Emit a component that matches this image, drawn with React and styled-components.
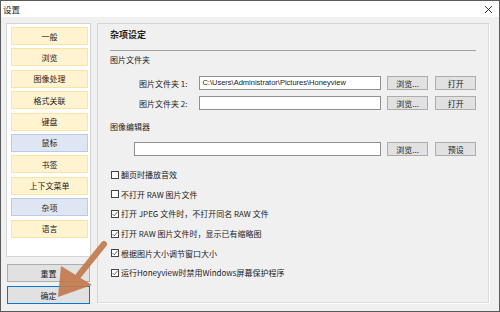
import React from 'react'
import styled, { createGlobalStyle } from 'styled-components'

const GlobalStyle = createGlobalStyle`
  body {
    margin: 0;
    background: #ffffff;
    font-family: "Noto Sans CJK SC", "Noto Sans", sans-serif;
  }
`

const navItems = [
  { label: '一般' },
  { label: '浏览' },
  { label: '图像处理' },
  { label: '格式关联' },
  { label: '键盘' },
  { label: '鼠标', blue: true },
  { label: '书签' },
  { label: '上下文菜单' },
  { label: '杂项', blue: true },
  { label: '语言' },
]

const options = [
  { text: '翻页时播放音效', checked: false },
  { text: '不打开 RAW 图片文件', checked: false },
  { text: '打开 JPEG 文件时，不打开同名 RAW 文件', checked: true },
  { text: '打开 RAW 图片文件时，显示已有缩略图', checked: true },
  { text: '根据图片大小调节窗口大小', checked: true },
  { text: '运行Honeyview时禁用Windows屏幕保护程序', checked: true },
]

export default function App() {
  return (
    <>
      <GlobalStyle />
      <Window>
        <TitleBar>
          <Caption>设置</Caption>
          <CloseIcon width="9" height="9" viewBox="0 0 9 9">
            <path d="M1 1 L8 8 M8 1 L1 8" stroke="#333" strokeWidth="1" fill="none" />
          </CloseIcon>
        </TitleBar>

        <Body>
          <LeftColumn>
            <NavList>
              {navItems.map(item => (
                <NavItem key={item.label} $blue={item.blue}>{item.label}</NavItem>
              ))}
            </NavList>
            <SideButton>重置</SideButton>
            <SideButton $focused>确定</SideButton>
          </LeftColumn>

          <GroupBox>
            <GroupTitle>杂项设定</GroupTitle>
            <Divider />

            <SectionLabel>图片文件夹</SectionLabel>
            <FieldRow $first>
              <FieldLabel>图片文件夹 1:</FieldLabel>
              <TextInput $w={183}>C:\Users\Administrator\Pictures\Honeyview</TextInput>
              <SmallButton>浏览...</SmallButton>
              <SmallButton $narrow>打开</SmallButton>
            </FieldRow>
            <FieldRow>
              <FieldLabel>图片文件夹 2:</FieldLabel>
              <TextInput $w={183} />
              <SmallButton>浏览...</SmallButton>
              <SmallButton $narrow>打开</SmallButton>
            </FieldRow>

            <SectionLabel $spaced>图像编辑器</SectionLabel>
            <EditorRow>
              <TextInput $w={249} />
              <SmallButton>浏览...</SmallButton>
              <SmallButton $narrow>预设</SmallButton>
            </EditorRow>

            <Options>
              {options.map(opt => (
                <OptionRow key={opt.text}>
                  <CheckBox>
                    {opt.checked && (
                      <svg width="6" height="6" viewBox="0 0 6 6">
                        <path d="M0.5 3 L2.3 4.8 L5.5 0.8" stroke="#444" strokeWidth="0.8" fill="none" />
                      </svg>
                    )}
                  </CheckBox>
                  <OptionText>{opt.text}</OptionText>
                </OptionRow>
              ))}
            </Options>
          </GroupBox>
        </Body>

        <Arrow width="60" height="70" viewBox="0 0 60 70">
          <line x1="51" y1="7" x2="26" y2="38" stroke="#c27a4e" strokeWidth="6" strokeLinecap="round" />
          <polygon points="5,60 8,29 39,48" fill="#c27a4e" />
        </Arrow>
      </Window>
    </>
  )
}

const Window = styled.div`
  position: relative;
  width: 500px;
  height: 312px;
  box-sizing: border-box;
  border: 1px solid #5a5a5a;
  background: #f0f0f0;
  display: flex;
  flex-direction: column;
  overflow: hidden;
`
const TitleBar = styled.div`
  height: 16px;
  background: #ffffff;
  display: flex;
  align-items: center;
  justify-content: space-between;
  padding: 0 6px 0 2px;
`
const Caption = styled.span`
  font-size: 8.5px;
  color: #222;
`
const CloseIcon = styled.svg`
  display: block;
`
const Body = styled.div`
  flex: 1;
  display: flex;
  padding: 6px 8px 0 5px;
  gap: 6px;
`
const LeftColumn = styled.div`
  width: 85px;
  display: flex;
  flex-direction: column;
`
const NavList = styled.div`
  height: 234px;
  box-sizing: border-box;
  background: #ffffff;
  border: 1px solid #d4d4d4;
  padding: 3px 2px 0 4px;
  display: flex;
  flex-direction: column;
  gap: 3.4px;
`
const NavItem = styled.div`
  height: 18px;
  box-sizing: border-box;
  border: 1px solid ${p => (p.$blue ? '#b9cbe7' : '#fbe3a8')};
  background: ${p => (p.$blue ? '#dee6f4' : '#fff3d0')};
  display: flex;
  align-items: center;
  justify-content: center;
  font-size: 8px;
  color: #222;
`
const SideButton = styled.div`
  height: 18px;
  box-sizing: border-box;
  margin: ${p => (p.$focused ? '4px 1px 0 1px' : '7px 1px 0 1px')};
  background: #e1e1e1;
  border: 1px solid ${p => (p.$focused ? '#0078d7' : '#adadad')};
  display: flex;
  align-items: center;
  justify-content: center;
  font-size: 8px;
  color: #222;
`
const GroupBox = styled.div`
  width: 393px;
  height: 281px;
  box-sizing: border-box;
  border: 1px solid #d5d5d5;
  border-right-color: #ffffff;
  border-bottom-color: #ffffff;
  box-shadow: inset -1px -1px 0 #dcdcdc;
  padding: 0 13px 0 12px;
  display: flex;
  flex-direction: column;
`
const GroupTitle = styled.div`
  margin-top: 4px;
  height: 14px;
  line-height: 14px;
  font-size: 9px;
  font-weight: 700;
  color: #222;
`
const Divider = styled.div`
  margin-top: 8px;
  height: 1px;
  background: #a0a0a0;
`
const SectionLabel = styled.div`
  margin-top: ${p => (p.$spaced ? '10px' : '2px')};
  height: 14px;
  line-height: 14px;
  font-size: 8px;
  color: #222;
`
const FieldRow = styled.div`
  display: flex;
  align-items: center;
  margin-top: ${p => (p.$first ? '9px' : '6px')};
  padding-left: 29px;
`
const EditorRow = styled.div`
  display: flex;
  align-items: center;
  margin-top: 8px;
  padding-left: 24px;
`
const FieldLabel = styled.div`
  width: 61px;
  font-size: 8px;
  color: #222;
`
const TextInput = styled.div`
  width: ${p => p.$w}px;
  height: 14px;
  box-sizing: border-box;
  background: #ffffff;
  border: 1px solid #8f8f8f;
  padding-left: 2px;
  font-family: "Liberation Sans", sans-serif;
  font-size: 7.5px;
  line-height: 12px;
  color: #222;
  white-space: nowrap;
  overflow: hidden;
`
const SmallButton = styled.div`
  width: ${p => (p.$narrow ? '41px' : '42px')};
  height: 14px;
  box-sizing: border-box;
  margin-left: ${p => (p.$narrow ? '7px' : '6px')};
  background: #e1e1e1;
  border: 1px solid #adadad;
  display: flex;
  align-items: center;
  justify-content: center;
  font-size: 8px;
  color: #222;
`
const Options = styled.div`
  margin-top: 9px;
  display: flex;
  flex-direction: column;
`
const OptionRow = styled.div`
  height: 19.6px;
  display: flex;
  align-items: center;
  padding-left: 1px;
`
const CheckBox = styled.div`
  width: 8px;
  height: 8px;
  box-sizing: border-box;
  border: 1px solid #444;
  background: #ffffff;
  display: flex;
  align-items: center;
  justify-content: center;
  margin-right: 2px;
`
const OptionText = styled.span`
  font-size: 8px;
  color: #222;
`
const Arrow = styled.svg`
  position: absolute;
  left: 52px;
  top: 236px;
  opacity: 0.92;
`
